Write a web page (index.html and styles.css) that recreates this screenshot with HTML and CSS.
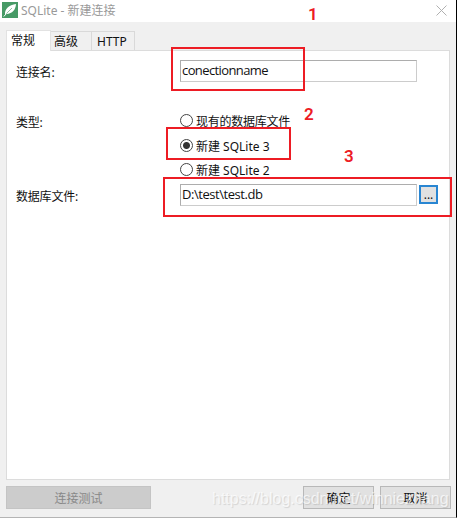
FILE: index.html
```
<!DOCTYPE html>
<html lang="zh-CN">
<head>
  <meta charset="UTF-8">
  <meta name="viewport" content="width=device-width, initial-scale=1.0">
  <title>SQLite - 新建连接</title>
  <link rel="stylesheet" href="styles.css">
</head>
<body>
  <div class="dialog">
    <div class="titlebar">
      <svg class="logo" width="16" height="16" viewBox="0 0 16 16">
        <rect width="16" height="16" fill="#479a66"/>
        <path d="M3 12.5 C2.5 7.5 7 2.5 14 2 C13.5 8 10.5 11.5 4.5 12 Z" fill="#fff"/>
        <path d="M4 12 L10 6" stroke="#479a66" stroke-width=".6" fill="none"/>
        <path d="M1.8 14.5 L4.4 11.6" stroke="#fff" stroke-width="1"/>
      </svg>
      <span class="title">SQLite - 新建连接</span>
      <svg class="close" width="11" height="11" viewBox="0 0 11 11">
        <path d="M.5 .5 L10.5 10.5 M10.5 .5 L.5 10.5" stroke="#b0b0b0" fill="none"/>
      </svg>
    </div>

    <div class="tabs">
      <div class="tab active">常规</div>
      <div class="tab">高级</div>
      <div class="tab last">HTTP</div>
    </div>

    <div class="panel">
      <div class="row name-row">
        <label for="name">连接名:</label>
        <input type="text" id="name" value="conectionname">
      </div>
      <div class="row type-row">
        <label>类型:</label>
        <div class="radios">
          <div class="radio"><span class="dot"></span><span class="cjk">现有的数据库文件</span></div>
          <div class="radio"><span class="dot checked"></span>新建 SQLite 3</div>
          <div class="radio"><span class="dot"></span>新建 SQLite 2</div>
        </div>
      </div>
      <div class="row file-row">
        <label for="file">数据库文件:</label>
        <input type="text" id="file" value="D:\test\test.db">
        <button class="browse">...</button>
      </div>
    </div>

    <div class="footer">
      <button class="btn test" disabled>连接测试</button>
      <button class="btn ok">确定</button>
      <button class="btn">取消</button>
    </div>

    <div class="mark mark-name"></div>
    <div class="mark mark-type"></div>
    <div class="mark mark-file"></div>
    <span class="num num-1">1</span>
    <span class="num num-2">2</span>
    <span class="num num-3">3</span>
    <div class="watermark">https://blog.csdn.net/winniezhang</div>
  </div>
</body>
</html>
```

FILE: styles.css
```
* {
  box-sizing: border-box;
}
body {
  margin: 0;
  font-family: "Noto Sans", "Noto Sans CJK SC", sans-serif;
  font-size: 12px;
  color: #111;
}
.dialog {
  position: relative;
  display: flex;
  flex-direction: column;
  width: 457px;
  height: 518px;
  background: #f0f0f0;
  border-right: 1px solid #000;
  border-bottom: 1px solid #b4b4b4;
  overflow: hidden;
}
.titlebar {
  display: flex;
  align-items: center;
  height: 22px;
  padding: 0 9px 2px 2px;
  background: #fff;
  color: #999;
}
.title {
  flex: 1;
  margin-left: 3px;
  padding-top: 1px;
  line-height: 18px;
}
.tabs {
  display: flex;
  align-items: flex-end;
  height: 28px;
  padding-left: 6px;
}
.tab {
  width: 41px;
  height: 19px;
  padding-left: 3px;
  line-height: 19px;
  white-space: nowrap;
  border: 1px solid #d9d9d9;
  border-left: none;
  border-bottom: none;
}
.tab.last {
  width: 43px;
  padding-left: 5px;
}
.tab.active {
  position: relative;
  z-index: 1;
  width: 45px;
  height: 21px;
  margin-bottom: -1px;
  padding-left: 4px;
  background: #fff;
  border: 1px solid #e2e2e2;
  border-bottom: none;
}
.panel {
  width: 444px;
  height: 430px;
  margin-left: 6px;
  padding: 9px 0 0 9px;
  background: #fff;
  border: 1px solid #dcdcdc;
}
.row {
  display: flex;
  align-items: flex-start;
}
.row label {
  width: 164px;
  padding-top: 1px;
  line-height: 24px;
  letter-spacing: -0.2px;
}
.name-row {
  height: 48px;
}
.type-row {
  height: 76px;
}
.type-row label {
  padding-top: 3px;
}
.file-row label {
  padding-top: 1px;
}
input {
  width: 237px;
  height: 22px;
  padding: 0 1px 2px;
  font-family: "Open Sans", sans-serif;
  font-size: 13px;
  letter-spacing: -0.6px;
  color: #111;
  background: #fff;
  border: 1px solid #adadad;
  border-right-color: #ccc;
  border-bottom-color: #ccc;
  outline: none;
}
#file {
  letter-spacing: -0.45px;
}
.radios {
  display: grid;
  grid-template-rows: 25px 24px 25px;
}
.radio {
  display: flex;
  align-items: center;
  height: 25px;
  white-space: pre;
}
.cjk {
  letter-spacing: -0.25px;
}
.dot {
  width: 13px;
  height: 13px;
  margin-right: 3px;
  border: 1px solid #444;
  border-radius: 50%;
  background: #fff;
}
.dot.checked {
  background: radial-gradient(circle, #333 3px, #fff 4px);
}
button {
  font: inherit;
  color: #111;
}
.browse {
  width: 19px;
  height: 19px;
  margin: 1px 0 0 2px;
  padding: 0;
  line-height: 15px;
  background: #e1e1e1;
  border: 2px solid #2986d2;
}
.footer {
  display: flex;
  margin: 6px 5px 0 6px;
}
.btn {
  width: 71px;
  height: 23px;
  padding: 0;
  background: #e1e1e1;
  border: 1px solid #b8b8b8;
}
.test {
  width: 145px;
  color: #888;
  background: #ccc;
  border-color: #c4c4c4;
}
.ok {
  margin: 0 6px 0 auto;
}

/* red callouts */
.mark {
  position: absolute;
  border: 2px solid #ed1c24;
}
.mark-name {
  left: 171px;
  top: 47px;
  width: 134px;
  height: 44px;
}
.mark-type {
  left: 166px;
  top: 127px;
  width: 125px;
  height: 33px;
}
.mark-file {
  left: 163px;
  top: 177px;
  width: 289px;
  height: 40px;
}
.num {
  position: absolute;
  font-family: Roboto, sans-serif;
  font-size: 17px;
  font-weight: 600;
  line-height: 16px;
  color: #ed1c24;
}
.num-1 {
  left: 308px;
  top: 6px;
}
.num-2 {
  left: 304px;
  top: 106px;
}
.num-3 {
  left: 344px;
  top: 148px;
}
.watermark {
  position: absolute;
  left: 212px;
  top: 489px;
  font: 16px/20px "Liberation Sans", sans-serif;
  color: rgba(255, 255, 255, 0.7);
  text-shadow: 1px 1px 1px rgba(0, 0, 0, 0.12);
  white-space: nowrap;
  pointer-events: none;
}
```
